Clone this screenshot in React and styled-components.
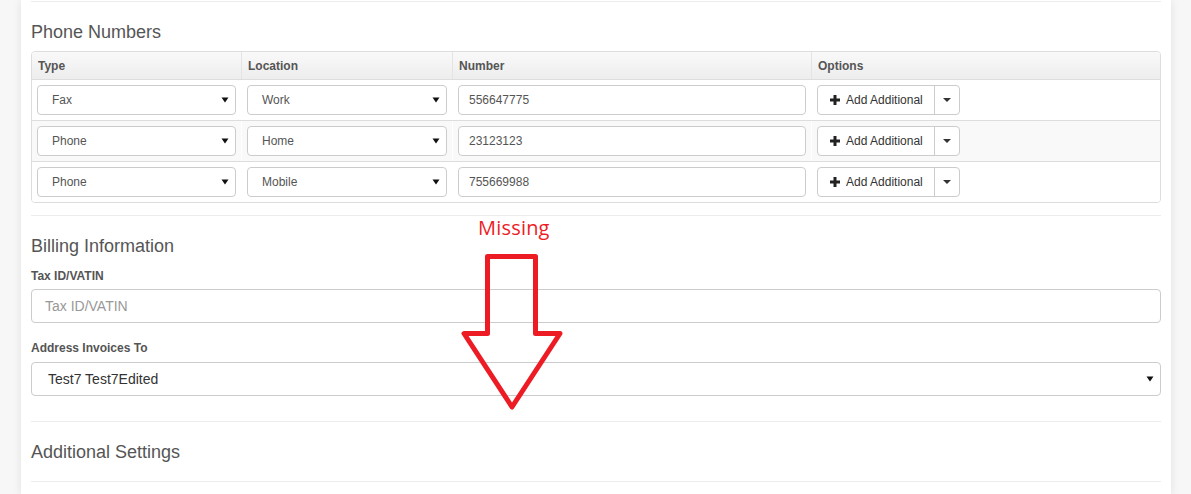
import React from 'react';
import styled, { createGlobalStyle } from 'styled-components';

const GlobalStyle = createGlobalStyle`
  html, body {
    margin: 0;
    padding: 0;
    background: #f7f7f7;
    font-family: "Liberation Sans", Arial, sans-serif;
    color: #555;
  }
`;

const Page = styled.div`
  position: relative;
  width: 1191px;
  height: 494px;
  overflow: hidden;
`;

const Card = styled.div`
  margin-left: 21px;
  width: 1130px;
  height: 494px;
  padding: 1px 10px 0;
  background: #fff;
  box-shadow: 0 0 9px rgba(0, 0, 0, 0.09);
  display: flex;
  flex-direction: column;
`;

const Rule = styled.div`
  border-top: 1px solid #ececec;
  margin-top: ${p => p.$top || 0}px;
`;

const SectionTitle = styled.h4`
  margin: ${p => p.$top}px 0 ${p => p.$bottom}px;
  font-size: 18px;
  line-height: 20px;
  font-weight: normal;
  color: #555;
`;

const Table = styled.div`
  border: 1px solid #ddd;
  border-radius: 4px;
  overflow: hidden;
`;

const Row = styled.div`
  display: grid;
  grid-template-columns: 209px 211px 359px 1fr;
  background: ${p => (p.$striped ? '#f9f9f9' : '#fff')};
  & + & {
    border-top: 1px solid #ddd;
  }
`;

const HeadRow = styled(Row)`
  height: 27px;
  background: linear-gradient(to bottom, #f9f9f9, #ededed);
`;

const HeadCell = styled.div`
  display: flex;
  align-items: center;
  padding-left: 6px;
  font-size: 12px;
  font-weight: bold;
  color: #555;
  & + & {
    border-left: 1px solid #e4e4e4;
  }
`;

const Cell = styled.div`
  padding: 5px;
  & + & {
    border-left: 1px solid #fff;
  }
`;

const SelectBox = styled.div`
  display: flex;
  align-items: center;
  justify-content: space-between;
  box-sizing: border-box;
  height: ${p => (p.$large ? 34 : 30)}px;
  padding: 0 6px 0 ${p => (p.$large ? 16 : 14)}px;
  border: 1px solid #ccc;
  border-radius: 4px;
  background: #fff;
  font-size: ${p => (p.$large ? 14 : 12)}px;
  color: ${p => (p.$large ? '#333' : '#555')};
`;

const TextInput = styled.div`
  display: flex;
  align-items: center;
  box-sizing: border-box;
  height: ${p => (p.$large ? 34 : 30)}px;
  padding-left: ${p => (p.$large ? 13 : 10)}px;
  border: 1px solid #ccc;
  border-radius: 4px;
  background: #fff;
  font-size: ${p => (p.$large ? 14 : 12)}px;
  color: ${p => (p.$placeholder ? '#999' : '#555')};
`;

const BtnGroup = styled.div`
  display: inline-flex;
  height: 30px;
  box-sizing: border-box;
  border: 1px solid #ccc;
  border-radius: 4px;
  background: #fff;
`;

const Btn = styled.div`
  display: flex;
  align-items: center;
  gap: 6px;
  padding: 0 11px 0 12px;
  font-size: 12px;
  color: #333;
`;

const CaretBtn = styled.div`
  display: flex;
  align-items: center;
  justify-content: center;
  width: 24px;
  border-left: 1px solid #ccc;
`;

const Label = styled.label`
  display: block;
  font-size: 12px;
  line-height: 17px;
  font-weight: bold;
  color: #555;
  margin: ${p => p.$top}px 0 ${p => p.$bottom}px;
`;

const Annotation = styled.div`
  position: absolute;
  left: 455px;
  top: 212px;
  width: 120px;
  pointer-events: none;
`;

const MissingText = styled.div`
  margin-left: 23px;
  font-family: "Open Sans", "Noto Sans", sans-serif;
  font-size: 20px;
  line-height: 32px;
  letter-spacing: 0.2px;
  color: #ed1c24;
`;

const Arrow = () => (
  <svg width="8" height="6" viewBox="0 0 8 6">
    <path d="M0.5 0.5 H7.5 L4 5.5 Z" fill="#111" />
  </svg>
);

const Caret = () => (
  <svg width="8" height="4" viewBox="0 0 8 4">
    <path d="M0 0 H8 L4 4 Z" fill="#333" />
  </svg>
);

const Plus = () => (
  <svg width="10" height="10" viewBox="0 0 10 10">
    <rect x="3.5" y="0" width="3" height="10" fill="#222" />
    <rect x="0" y="3.5" width="10" height="3" fill="#222" />
  </svg>
);

const phones = [
  { type: 'Fax', location: 'Work', number: '556647775' },
  { type: 'Phone', location: 'Home', number: '23123123' },
  { type: 'Phone', location: 'Mobile', number: '755669988' },
];

const Select = ({ value, large }) => (
  <SelectBox $large={large}>
    <span>{value}</span>
    <Arrow />
  </SelectBox>
);

export default function App() {
  return (
    <Page>
      <GlobalStyle />
      <Card>
        <Rule />
        <SectionTitle $top={20} $bottom={9}>Phone Numbers</SectionTitle>
        <Table>
          <HeadRow>
            <HeadCell>Type</HeadCell>
            <HeadCell>Location</HeadCell>
            <HeadCell>Number</HeadCell>
            <HeadCell>Options</HeadCell>
          </HeadRow>
          {phones.map((p, i) => (
            <Row key={i} $striped={i === 1}>
              <Cell><Select value={p.type} /></Cell>
              <Cell><Select value={p.location} /></Cell>
              <Cell><TextInput>{p.number}</TextInput></Cell>
              <Cell>
                <BtnGroup>
                  <Btn><Plus />Add Additional</Btn>
                  <CaretBtn><Caret /></CaretBtn>
                </BtnGroup>
              </Cell>
            </Row>
          ))}
        </Table>
        <Rule $top={12} />
        <SectionTitle $top={20} $bottom={0}>Billing Information</SectionTitle>
        <Label $top={12} $bottom={4}>Tax ID/VATIN</Label>
        <TextInput $large $placeholder>Tax ID/VATIN</TextInput>
        <Label $top={17} $bottom={5}>Address Invoices To</Label>
        <Select large value="Test7 Test7Edited" />
        <Rule $top={25} />
        <SectionTitle $top={20} $bottom={19}>Additional Settings</SectionTitle>
        <Rule />
      </Card>
      <Annotation>
        <MissingText>Missing</MissingText>
        <svg width="120" height="175" viewBox="455 244 120 175">
          <path
            d="M487.5 256.5 H535.5 V333.5 H560 L512 407 L464 333.5 H487.5 Z"
            fill="none"
            stroke="#ed1c24"
            strokeWidth="5"
            strokeLinejoin="round"
          />
        </svg>
      </Annotation>
    </Page>
  );
}
